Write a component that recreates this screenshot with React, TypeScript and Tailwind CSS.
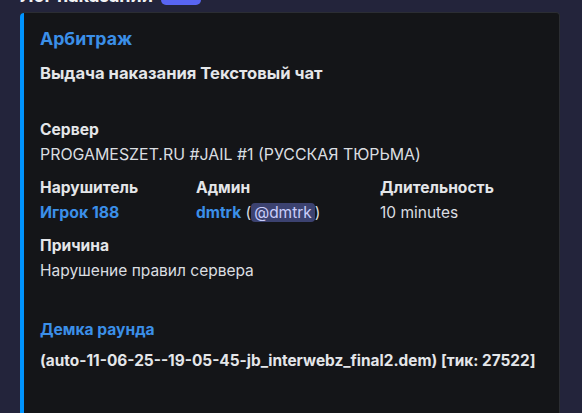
import React from "react";

/* ---------- Data ---------- */
const INLINE_FIELDS = [
  { id: "offender", name: "Нарушитель", width: "w-[156px]" },
  { id: "admin", name: "Админ", width: "w-[184px]" },
  { id: "duration", name: "Длительность", width: "w-[140px]" },
];

const FONT = "font-['Inter','Noto_Sans',sans-serif]";

/* ---------- Field ---------- */
const FieldName = ({ children }: { children: React.ReactNode }) => (
  <div className="text-[15.6px] leading-[20px] font-bold text-[#e4e6e9]">{children}</div>
);

const FieldValue = ({ children, size = "text-[15.5px]" }: { children: React.ReactNode; size?: string }) => (
  <div className={`mt-[4px] leading-[22px] text-[#dbdee1] ${size}`}>{children}</div>
);

/* ---------- App ---------- */
export default function App() {
  return (
    <div className={`h-[413px] overflow-hidden bg-[#23243b] ${FONT}`}>
      {/* Message header (scrolled mostly out of view) */}
      <div className="-mt-[15px] flex h-[20px] items-center pl-[20px]">
        <span className="text-[18px] font-bold text-[#f2f3f5]">Лог наказаний</span>
        <span className="ml-[8px] flex h-[19px] w-[40px] items-center justify-center rounded-[5px] bg-[#5865f2] text-[11px] font-bold text-white">
          БОТ
        </span>
        <span className="ml-[12px] text-[13px] text-[#949ba4]">11.06.2025 19:06</span>
      </div>

      {/* Embed */}
      <div className="ml-[20px] mt-[7px] w-[540px] h-[420px] rounded-[4px] border border-l-0 border-[#2b2d33] bg-[#141518] flex">
        <div className="w-[4px] shrink-0 rounded-l-[4px] bg-[#0094ff]" />
        <div className="pl-[16px] pt-[15px] pr-4">
          <div className="text-[17.7px] leading-[22px] font-bold text-[#3b8fe8]">Арбитраж</div>
          <div className="mt-[13px] text-[16.6px] leading-[20px] font-bold text-[#e4e6e9]">
            Выдача наказания Текстовый чат
          </div>

          <div className="mt-[37px]">
            <FieldName>Сервер</FieldName>
            <FieldValue size="text-[15.9px]">PROGAMESZET.RU #JAIL #1 (РУССКАЯ ТЮРЬМА)</FieldValue>
          </div>

          <div className="mt-[12px] flex">
            {INLINE_FIELDS.map((f) => (
              <div key={f.id} className={f.width}>
                <FieldName>{f.name}</FieldName>
                {f.id === "offender" && (
                  <div className="mt-[4px] text-[15.8px] leading-[22px] font-bold text-[#3b8fe8]">Игрок 188</div>
                )}
                {f.id === "admin" && (
                  <FieldValue>
                    <span className="font-bold text-[#3b8fe8]">dmtrk</span>{" "}(
                    <span className="rounded-[4px] bg-[#3c4270] px-[3px] text-[#c9cdfb]">@dmtrk</span>)
                  </FieldValue>
                )}
                {f.id === "duration" && <FieldValue>10 minutes</FieldValue>}
              </div>
            ))}
          </div>

          <div className="mt-[12px]">
            <FieldName>Причина</FieldName>
            <FieldValue>Нарушение правил сервера</FieldValue>
          </div>

          <div className="mt-[38px]">
            <div className="text-[15.6px] leading-[20px] font-bold text-[#3b8fe8]">Демка раунда</div>
            <div className="mt-[10px] text-[15.4px] leading-[22px] font-bold text-[#e4e6e9] whitespace-nowrap">
              (auto-11-06-25--19-05-45-jb_interwebz_final2.dem) [тик: 27522]
            </div>
          </div>
        </div>
      </div>
    </div>
  );
}
